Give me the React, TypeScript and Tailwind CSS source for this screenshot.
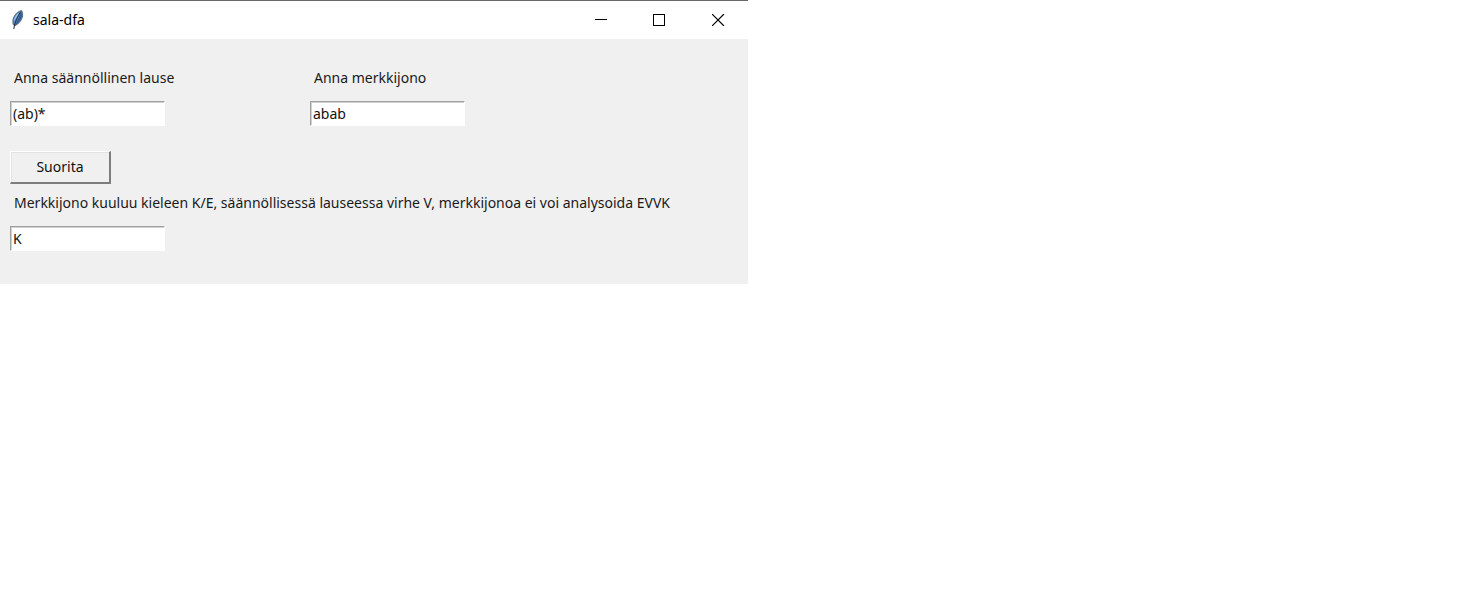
import { useState } from "react";

const fieldClass =
  "h-[25px] w-[155px] rounded-none border border-t-[#a0a0a0] border-l-[#a0a0a0] border-r-white border-b-white bg-white pl-0.5 text-sm text-[#111] shadow-[inset_1px_1px_0_#d0d0d0] outline-none";
const labelClass = "block pl-1 text-sm leading-5 text-[#1a1a1a]";
const captionButton = "flex w-[59px] items-center justify-center hover:bg-gray-200";

function FeatherIcon() {
  return (
    <svg width="16" height="22" viewBox="0 0 16 22" aria-hidden="true">
      <path
        d="M12.6 1.4C8.8 2.4 5.6 5.4 4.3 9.2c-.6 2-.6 4.6 0 6.6l1.6 1c3.2-1.6 6-4.4 7.3-8 .8-2.6.5-5.5-.6-7.4z"
        fill="#5b8fc6"
        stroke="#4b5563"
        strokeWidth="0.8"
      />
      <path d="M12 2.2c1.2 2.4 1.3 4.6.5 6.8-1.2 3.2-3.6 5.8-6.4 7.2C8 11.400 10.600 7 12 2.200z" fill="#2f5f96" />
      <path d="M10.600 3.400C7.600 5 5.400 8 4.900 12.600 6.600 9 8.600 6 10.600 3.400z" fill="#b4d0ee" />
      <path d="M11.400 3.200C8.600 8 6 12 4.800 20" fill="none" stroke="#20242b" strokeWidth="1" />
    </svg>
  );
}

function Field({
  id,
  label,
  value,
  onChange,
}: {
  id: string;
  label: string;
  value: string;
  onChange: (value: string) => void;
}) {
  return (
    <div className="flex flex-col items-start gap-[13px]">
      <label htmlFor={id} className={labelClass}>
        {label}
      </label>
      <input id={id} type="text" value={value} onChange={(e) => onChange(e.target.value)} className={fieldClass} />
    </div>
  );
}

export default function App() {
  const [expression, setExpression] = useState("(ab)*");
  const [word, setWord] = useState("abab");
  const [result, setResult] = useState("K");

  return (
    <main className="min-h-screen bg-white font-['Noto_Sans','Open_Sans',sans-serif]">
      <section className="w-full max-w-[748px] border-t border-[#6b6769] bg-[#f0f0f0]">
        <header className="flex h-[38px] items-stretch justify-between bg-white">
          <div className="flex items-center gap-2 pl-[9px]">
            <FeatherIcon />
            <h1 className="text-sm text-black">sala-dfa</h1>
          </div>
          <div className="flex">
            <button type="button" aria-label="Minimize" className={captionButton}>
              <svg width="13" height="12" viewBox="0 0 13 12" shapeRendering="crispEdges">
                <path d="M1 5.5h12" stroke="#000" />
              </svg>
            </button>
            <button type="button" aria-label="Maximize" className={captionButton}>
              <svg width="13" height="12" viewBox="0 0 13 12" shapeRendering="crispEdges">
                <rect x="0.5" y="0.5" width="11" height="11" fill="none" stroke="#000" />
              </svg>
            </button>
            <button type="button" aria-label="Close" className={captionButton}>
              <svg width="13" height="12" viewBox="0 0 13 12">
                <path d="M0 0l12 12M12 0L0 12" stroke="#000" strokeWidth="1.2" />
              </svg>
            </button>
          </div>
        </header>

        <form className="px-2.5 pt-[29px] pb-[33px]" onSubmit={(e) => e.preventDefault()}>
          <div className="flex flex-wrap">
            <div className="w-[300px]">
              <Field id="expression" label="Anna säännöllinen lause" value={expression} onChange={setExpression} />
            </div>
            <Field id="word" label="Anna merkkijono" value={word} onChange={setWord} />
          </div>
          <button
            type="submit"
            className="mt-[25px] mb-[9px] block h-[33px] w-[101px] border-t border-r-2 border-b-2 border-l border-t-white border-r-[#7d7d7d] border-b-[#7d7d7d] border-l-white bg-[#f0f0f0] text-sm text-[#111] shadow-[inset_1px_1px_0_#e3e3e3]"
          >
            Suorita
          </button>
          <Field
            id="result"
            label="Merkkijono kuuluu kieleen K/E, säännöllisessä lauseessa virhe V, merkkijonoa ei voi analysoida EVVK"
            value={result}
            onChange={setResult}
          />
        </form>
      </section>
    </main>
  );
}
